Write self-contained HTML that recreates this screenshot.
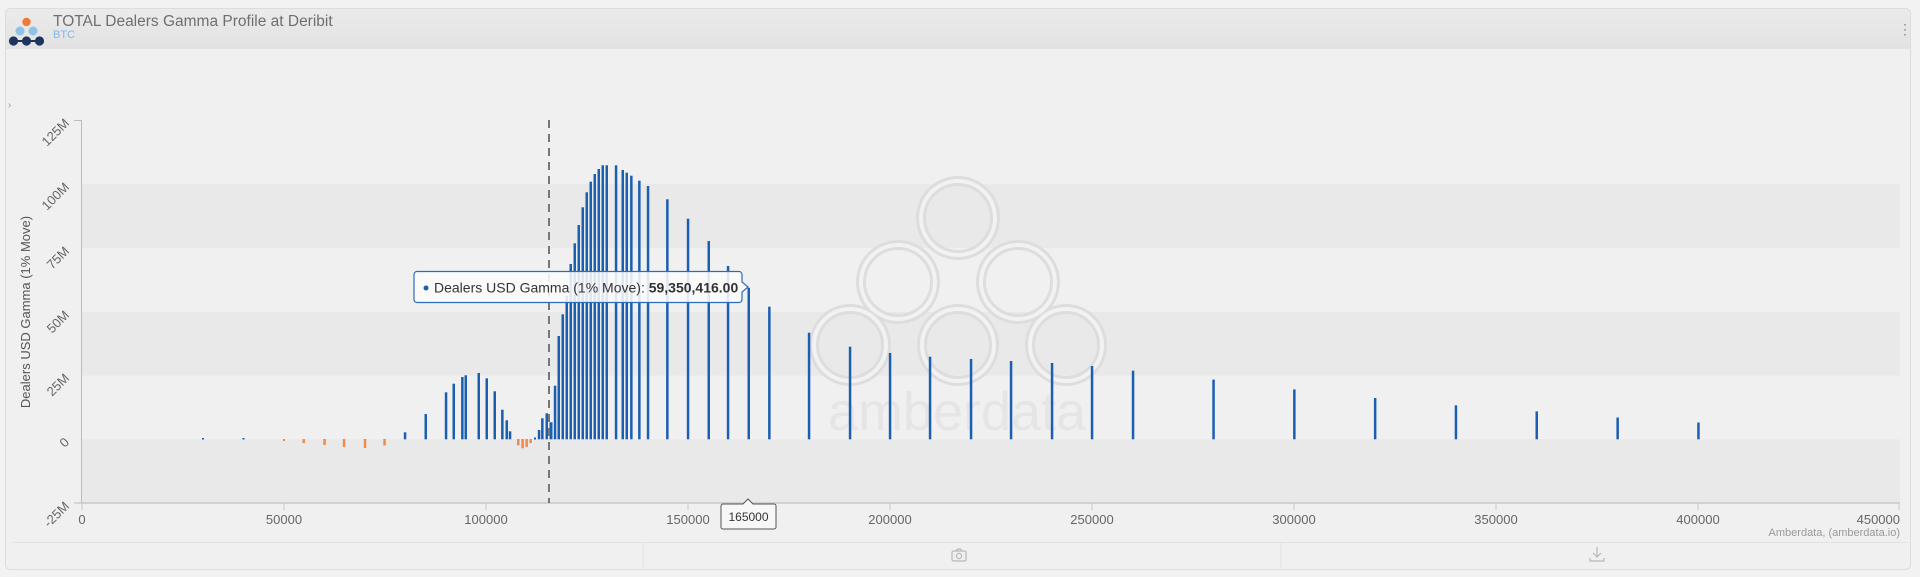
<!DOCTYPE html>
<html><head><meta charset="utf-8"><style>
html,body{margin:0;padding:0;background:#efefef;width:1920px;height:577px;overflow:hidden}
svg{display:block;font-family:"Liberation Sans",sans-serif}
</style></head><body>
<svg width="1920" height="577" viewBox="0 0 1920 577" xmlns="http://www.w3.org/2000/svg">
<defs><linearGradient id="hg" x1="0" y1="0" x2="0" y2="1"><stop offset="0" stop-color="#ebebeb"/><stop offset="1" stop-color="#e2e2e2"/></linearGradient></defs>
<rect x="0" y="0" width="1920" height="577" fill="#f2f2f2"/>
<rect x="5.5" y="8.5" width="1905" height="561" rx="5" fill="#f0f0f0" stroke="#dcdcdc"/>
<path d="M6 49 V14 a5 5 0 0 1 5 -5 H1905 a5 5 0 0 1 5 5 V49 Z" fill="url(#hg)"/>
<!-- logo -->
<circle cx="26.5" cy="22" r="4.2" fill="#f07a3a"/>
<circle cx="20" cy="31" r="4.5" fill="#8fc2e8"/><circle cx="33" cy="31" r="4.5" fill="#8fc2e8"/>
<line x1="11" y1="41" x2="42" y2="41" stroke="#1c3560" stroke-width="2"/>
<circle cx="13.5" cy="41" r="4.6" fill="#1c3560"/><circle cx="26.5" cy="41" r="4.6" fill="#1c3560"/><circle cx="39.5" cy="41" r="4.6" fill="#1c3560"/>
<text x="53" y="26" font-size="15.5" fill="#6f6f6f">TOTAL Dealers Gamma Profile at Deribit</text>
<text x="53" y="38" font-size="11" fill="#7fb7ef">BTC</text>
<text x="1898" y="34" font-size="14" fill="#888">⋮</text>
<text x="8" y="108" font-size="10" fill="#999">›</text>
<!-- bands -->
<rect x="82" y="184" width="1818" height="64" fill="#e9e9e9"/>
<rect x="82" y="312" width="1818" height="63.5" fill="#e9e9e9"/>
<rect x="82" y="439.3" width="1818" height="63.7" fill="#e9e9e9"/>
<!-- watermark -->
<g fill="none" opacity="0.9">
<g stroke="#dcdcdc" stroke-width="10">
<circle cx="958" cy="218" r="37"/>
<circle cx="898" cy="282" r="37"/><circle cx="1018" cy="282" r="37"/>
<circle cx="850" cy="345" r="36"/><circle cx="958" cy="345" r="36"/><circle cx="1066" cy="345" r="36"/>
</g>
<g stroke="#f3f3f3" stroke-width="4">
<circle cx="958" cy="218" r="37"/>
<circle cx="898" cy="282" r="37"/><circle cx="1018" cy="282" r="37"/>
<circle cx="850" cy="345" r="36"/><circle cx="958" cy="345" r="36"/><circle cx="1066" cy="345" r="36"/>
</g>
</g>
<text x="957" y="430" font-size="54" fill="#e5e5e5" text-anchor="middle">amberdata</text>
<!-- axes -->
<line x1="81.5" y1="120" x2="81.5" y2="503" stroke="#bbb"/>
<line x1="74" y1="120.5" x2="82" y2="120.5" stroke="#bbb"/>
<line x1="74" y1="503" x2="82" y2="503" stroke="#bbb"/>
<line x1="82" y1="503" x2="1900" y2="503" stroke="#c8c8c8" stroke-width="1.5"/>
<g stroke="#c8c8c8">
<line x1="82" y1="503" x2="82" y2="510"/><line x1="284" y1="503" x2="284" y2="510"/><line x1="486" y1="503" x2="486" y2="510"/><line x1="688" y1="503" x2="688" y2="510"/><line x1="890" y1="503" x2="890" y2="510"/><line x1="1092" y1="503" x2="1092" y2="510"/><line x1="1294" y1="503" x2="1294" y2="510"/><line x1="1496" y1="503" x2="1496" y2="510"/><line x1="1698" y1="503" x2="1698" y2="510"/><line x1="1899" y1="503" x2="1899" y2="510"/>
</g>
<g font-size="13" fill="#666" text-anchor="middle">
<text x="82" y="524">0</text><text x="284" y="524">50000</text><text x="486" y="524">100000</text><text x="688" y="524">150000</text><text x="890" y="524">200000</text><text x="1092" y="524">250000</text><text x="1294" y="524">300000</text><text x="1496" y="524">350000</text><text x="1698" y="524">400000</text><text x="1900" y="524" text-anchor="end">450000</text>
</g>
<g font-size="13" fill="#666" text-anchor="end">
<text transform="translate(70,124) rotate(-45)">125M</text>
<text transform="translate(70,188) rotate(-45)">100M</text>
<text transform="translate(70,252) rotate(-45)">75M</text>
<text transform="translate(70,316) rotate(-45)">50M</text>
<text transform="translate(70,379) rotate(-45)">25M</text>
<text transform="translate(70,443) rotate(-45)">0</text>
<text transform="translate(70,507) rotate(-45)">-25M</text>
</g>
<text transform="translate(30,312) rotate(-90)" font-size="13" fill="#555" text-anchor="middle">Dealers USD Gamma (1% Move)</text>
<text x="1900" y="536" font-size="11" fill="#999" text-anchor="end">Amberdata, (amberdata.io)</text>
<!-- orange bars -->
<g fill="#f08a4b">
<rect x="283" y="439" width="2" height="2"/><rect x="302.5" y="439" width="2.5" height="4"/><rect x="323.3" y="439" width="2.5" height="6"/><rect x="342.8" y="439" width="2.5" height="8"/><rect x="363.8" y="439" width="2.5" height="9"/><rect x="383.3" y="439" width="2.5" height="6.5"/>
<rect x="517" y="439" width="2.5" height="6.3"/><rect x="521.4" y="439" width="2.5" height="9.3"/><rect x="525.4" y="439" width="2.5" height="8"/><rect x="529.4" y="439" width="2.5" height="4"/>
</g>
<!-- blue bars -->
<g fill="#1a5fb0">
<rect x="202" y="438" width="2" height="1.5"/><rect x="242.5" y="438" width="2" height="1.5"/><rect x="534" y="437.5" width="2" height="2"/>
<rect x="403.8" y="432.3" width="2.5" height="7"/><rect x="424.5" y="414" width="2.5" height="25.3"/><rect x="444.8" y="392.3" width="2.5" height="47"/><rect x="452.5" y="383.7" width="2.5" height="55.6"/><rect x="461.1" y="377" width="2.5" height="62.3"/><rect x="464.5" y="375.3" width="2.5" height="64"/><rect x="477.5" y="373" width="2.5" height="66.3"/><rect x="485.5" y="378.3" width="2.5" height="61"/><rect x="493.5" y="391.3" width="2.5" height="48"/><rect x="501.1" y="409.7" width="2.5" height="29.6"/><rect x="505.5" y="420.3" width="2.5" height="19"/><rect x="508.8" y="431.3" width="2.5" height="8"/>
<rect x="537.8" y="430" width="2.5" height="9.3"/><rect x="541.1" y="418.3" width="2.5" height="21"/><rect x="545.5" y="413.3" width="2.5" height="26"/><rect x="549.5" y="422.3" width="3" height="17"/><rect x="553.8" y="385.7" width="2.5" height="53.6"/><rect x="557.5" y="336" width="2.5" height="103.3"/><rect x="561.5" y="314.3" width="2.5" height="125"/><rect x="565.5" y="296" width="2.5" height="143.3"/><rect x="569.5" y="264" width="2.5" height="175.3"/><rect x="573.5" y="243.3" width="2.5" height="196"/><rect x="577.5" y="225" width="2.5" height="214.3"/><rect x="581.5" y="207.3" width="2.5" height="232"/><rect x="585.5" y="192.3" width="2.5" height="247"/><rect x="589.5" y="181.7" width="2.5" height="257.6"/><rect x="593.5" y="174" width="2.5" height="265.3"/><rect x="597.5" y="169" width="2.5" height="270.3"/><rect x="601.5" y="165.3" width="2.5" height="274"/><rect x="605.5" y="165.3" width="2.5" height="274"/><rect x="614.8" y="165.3" width="2.5" height="274"/><rect x="621.5" y="170" width="2.5" height="269.3"/><rect x="625.5" y="172.7" width="2.5" height="266.6"/><rect x="630.1" y="175.7" width="2.5" height="263.6"/><rect x="638.1" y="180.7" width="2.5" height="258.6"/><rect x="646.8" y="186" width="2.5" height="253.3"/><rect x="666.1" y="199.3" width="2.5" height="240"/><rect x="686.8" y="218.7" width="2.5" height="220.6"/><rect x="707.5" y="241" width="2.5" height="198.3"/><rect x="726.8" y="266" width="2.5" height="173.3"/><rect x="747.5" y="287.8" width="2.5" height="151.5"/><rect x="768.1" y="306.7" width="2.5" height="132.6"/>
<rect x="807.8" y="332.7" width="2.5" height="106.6"/><rect x="848.8" y="346.7" width="2.5" height="92.6"/><rect x="888.8" y="353" width="2.5" height="86.3"/><rect x="928.8" y="356.7" width="2.5" height="82.6"/><rect x="969.8" y="359" width="2.5" height="80.3"/><rect x="1009.8" y="361" width="2.5" height="78.3"/><rect x="1050.8" y="363" width="2.5" height="76.3"/><rect x="1090.8" y="366" width="2.5" height="73.3"/><rect x="1131.8" y="370.7" width="2.5" height="68.6"/>
<rect x="1212.3" y="379.6" width="2.5" height="59.7"/><rect x="1293.1" y="389.4" width="2.5" height="49.9"/><rect x="1373.9" y="398" width="2.5" height="41.3"/><rect x="1454.7" y="405.3" width="2.5" height="34"/><rect x="1535.5" y="411.4" width="2.5" height="27.9"/><rect x="1616.4" y="417.5" width="2.5" height="21.8"/><rect x="1697.2" y="422.5" width="2.5" height="16.8"/>
</g>
<!-- dashed line -->
<line x1="549" y1="120" x2="549" y2="503" stroke="#777" stroke-width="2" stroke-dasharray="8,6"/>
<!-- tooltip -->
<path d="M417 271.5 H739 a3 3 0 0 1 3 3 V282 L748 287 L742 292 V299.5 a3 3 0 0 1 -3 3 H417 a3 3 0 0 1 -3 -3 V274.5 a3 3 0 0 1 3 -3 Z" fill="rgba(250,250,250,0.88)" stroke="#2b6cb8" stroke-width="1.2"/>
<circle cx="426" cy="288" r="2.5" fill="#1a5fb0"/>
<text x="434" y="292.5" font-size="14" fill="#333">Dealers USD Gamma (1% Move): <tspan font-weight="bold">59,350,416.00</tspan></text>
<!-- crosshair label -->
<path d="M723 504 H743 L748 499 L753 504 H774 a2 2 0 0 1 2 2 V527 a2 2 0 0 1 -2 2 H723 a2 2 0 0 1 -2 -2 V506 a2 2 0 0 1 2 -2 Z" fill="#f7f7f7" stroke="#555"/>
<text x="748.5" y="521" font-size="12" fill="#333" text-anchor="middle">165000</text>
<!-- toolbar -->
<line x1="12" y1="542.5" x2="1908" y2="542.5" stroke="#e2e2e2"/>
<line x1="643" y1="543" x2="643" y2="568" stroke="#e2e2e2"/>
<line x1="1281" y1="543" x2="1281" y2="568" stroke="#e2e2e2"/>
<g fill="none" stroke="#b8b8b8" stroke-width="1.2">
<rect x="952" y="551" width="14" height="10" rx="1.5"/><path d="M956 551 l1.5 -2 h3 l1.5 2"/><circle cx="959" cy="556" r="2.6"/>
<path d="M1597 547 v10 M1593 553 l4 4 l4 -4 M1590 558 v3 h14 v-3"/>
</g>
</svg>
</body></html>
